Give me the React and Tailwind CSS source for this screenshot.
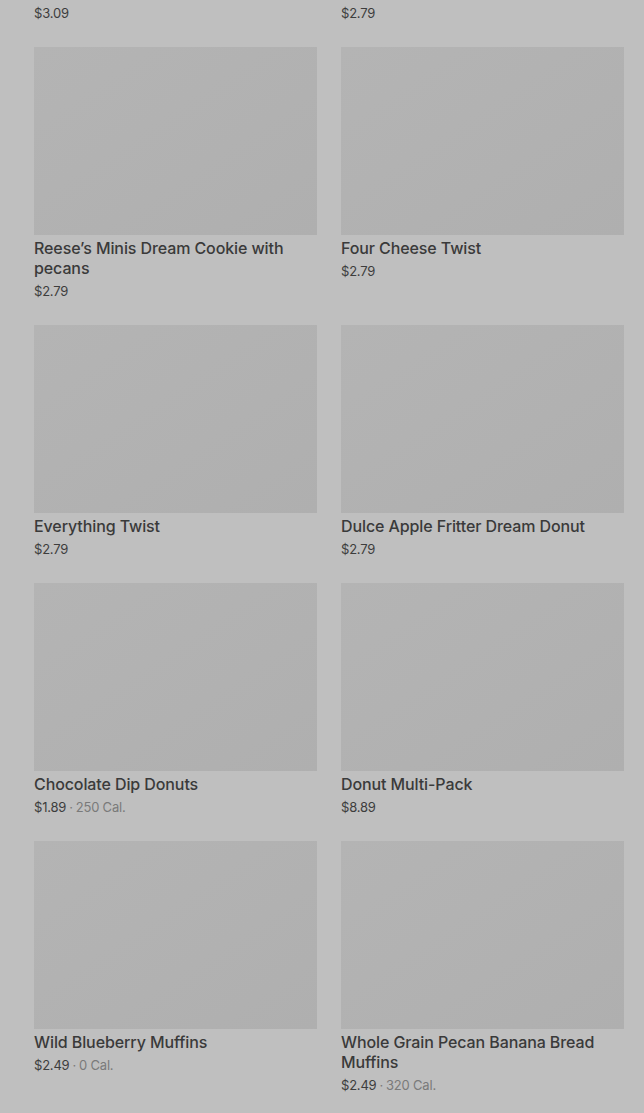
import React from "react";

const items = [
  { title: "Reese’s Minis Dream Cookie with pecans", price: "$2.79" },
  { title: "Four Cheese Twist", price: "$2.79" },
  { title: "Everything Twist", price: "$2.79" },
  { title: "Dulce Apple Fritter Dream Donut", price: "$2.79" },
  { title: "Chocolate Dip Donuts", price: "$1.89", cal: "250 Cal." },
  { title: "Donut Multi-Pack", price: "$8.89" },
  { title: "Wild Blueberry Muffins", price: "$2.49", cal: "0 Cal." },
  { title: "Whole Grain Pecan Banana Bread Muffins", price: "$2.49", cal: "320 Cal." },
];

function Price({ price, cal }) {
  return (
    <div className="mt-[3px] text-[13px] leading-5 tracking-[-0.2px] text-[#3d3d3d]">
      {price}
      {cal && (
        <span className="text-[#7a7a7a]">
          <span className="mx-[3px]">·</span>
          {cal}
        </span>
      )}
    </div>
  );
}

export default function App() {
  return (
    <div
      className="min-h-[1113px] w-[644px] bg-[#bfbfbf] pl-[34px] pr-[20px] pb-6"
      style={{ fontFamily: "Inter, 'Noto Sans', Arial, sans-serif" }}
    >
      <div className="grid grid-cols-2 gap-x-6">
        <Price price="$3.09" />
        <Price price="$2.79" />
      </div>
      <div className="mt-6 grid grid-cols-2 gap-x-6 gap-y-6">
        {items.map((it, i) => (
          <div key={i} className="flex flex-col">
            <div className="h-[188px] w-full bg-gradient-to-br from-[#b4b4b4] to-[#afafaf]" />
            <div className="mt-[3px] text-[16px] font-medium leading-5 tracking-[-0.1px] text-[#3a3a3a]">
              {it.title}
            </div>
            <Price price={it.price} cal={it.cal} />
          </div>
        ))}
      </div>
    </div>
  );
}
